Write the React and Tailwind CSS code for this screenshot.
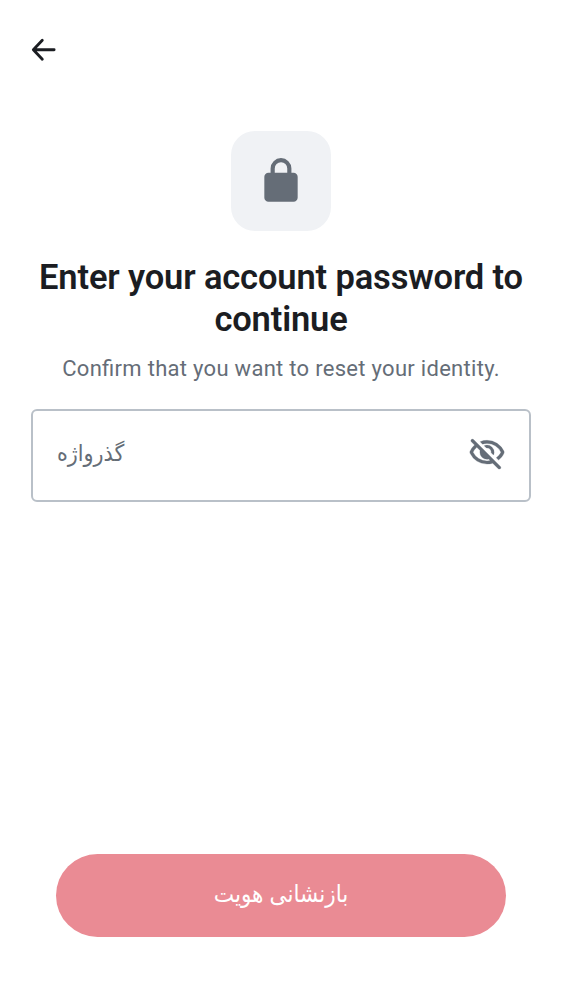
export default function App() {
  return (
    <main className="flex h-[1000px] w-[562px] flex-col bg-white font-[Roboto,'DejaVu_Sans_Condensed','DejaVu_Sans',sans-serif]">
      <header className="flex h-[100px] items-center px-[29px] pb-px">
        <button aria-label="Back" className="text-[#1b1d22]">
          <svg width="29" height="29" viewBox="0 0 24 24" fill="none" stroke="currentColor" strokeWidth="2.35" strokeLinecap="round" strokeLinejoin="round">
            <path d="M20.8 12.2H4M11 4.4 3.6 12.2l7.4 7.8" />
          </svg>
        </button>
      </header>
      <section className="flex flex-col items-center px-[31px] pt-[31px]">
        <div className="flex size-[100px] items-center justify-center rounded-[24px] bg-[#f0f2f5] text-[#656d77]">
          <svg width="50" height="50" viewBox="0 0 24 24" fill="currentColor">
            <path d="M6 22q-.824 0-1.412-.587A1.93 1.93 0 0 1 4 20V10q0-.825.588-1.412A1.93 1.93 0 0 1 6 8h1V6q0-2.075 1.463-3.537Q9.926 1 12 1t3.537 1.463T17 6v2h1q.824 0 1.413.588Q20 9.175 20 10v10q0 .824-.587 1.413A1.93 1.93 0 0 1 18 22zM9 8h6V6q0-1.25-.875-2.125A2.9 2.9 0 0 0 12 3q-1.25 0-2.125.875A2.9 2.9 0 0 0 9 6z" />
          </svg>
        </div>
        <h1 className="mt-[25px] text-center text-[34.5px] leading-[42px] font-semibold tracking-[-0.15px] whitespace-nowrap text-[#1b1d22]">Enter your account password to<br />continue</h1>
        <p className="mt-[13px] text-center text-[22px] leading-[31px] tracking-[0.29px] text-[#656d77] [font-feature-settings:'liga'_1]">Confirm that you want to reset your identity.</p>
      </section>
      <div className="mx-[31px] mt-[25px] flex h-[93px] items-center justify-between rounded-[6px] border-2 border-[#b9c0c8] pr-[23px] pb-[5px] pl-[24px] text-[#656d77]">
        <span dir="rtl" className="pt-[3px] text-[23px]">گذرواژه</span>
        <svg width="38" height="38" viewBox="0 0 24 24" fill="currentColor" stroke="currentColor" strokeWidth="0.15">
          <path d="m16.1 13.3-1.45-1.45q.225-1.175-.675-2.2t-2.325-.8L10.2 7.4q.424-.2.863-.3A4.2 4.2 0 0 1 12 7q1.875 0 3.188 1.313Q16.5 9.625 16.5 11.5q0 .5-.1.938t-.3.862m3.2 3.15-1.45-1.4a11 11 0 0 0 1.688-1.588A9 9 0 0 0 20.8 11.5q-1.25-2.524-3.588-4.012Q14.875 6 12 6q-.724 0-1.425.1a10 10 0 0 0-1.375.3L7.65 4.85A11.1 11.1 0 0 1 12 4q3.575 0 6.425 1.887T22.7 10.8a1 1 0 0 1 .112.313 2 2 0 0 1 .038.387 2 2 0 0 1-.125.675 11 11 0 0 1-1.438 2.375A10.5 10.5 0 0 1 19.3 16.45m-.2 5.45-3.5-3.45a11.6 11.6 0 0 1-3.6.55q-3.575 0-6.425-1.887Q2.725 15.225 1.3 12.2a.8.8 0 0 1-.112-.312 2.3 2.3 0 0 1 0-.763.8.8 0 0 1 .112-.3A11.6 11.6 0 0 1 4.15 7L2.075 4.9a.93.93 0 0 1-.275-.688q0-.412.3-.712a.95.95 0 0 1 .7-.275q.424 0 .7.275l17 17q.275.275.288.688a.93.93 0 0 1-.288.712.95.95 0 0 1-.7.275.95.95 0 0 1-.7-.275M5.55 8.4A10 10 0 0 0 3.2 11.5q1.25 2.524 3.587 4.012T12 17q.5 0 .975-.063.475-.061.975-.137l-.9-.95q-.275.075-.525.113A3.5 3.5 0 0 1 12 16q-1.875 0-3.188-1.312Q7.5 13.375 7.5 11.5q0-.274.038-.525.037-.25.112-.525z" />
        </svg>
      </div>
      <div className="grow" />
      <button className="mx-[56px] mb-[62.7px] flex h-[83.3px] items-center justify-center rounded-full bg-[#ea8b94] pb-[4px] text-[24px] text-white" dir="rtl">بازنشانی هویت</button>
    </main>
  );
}
